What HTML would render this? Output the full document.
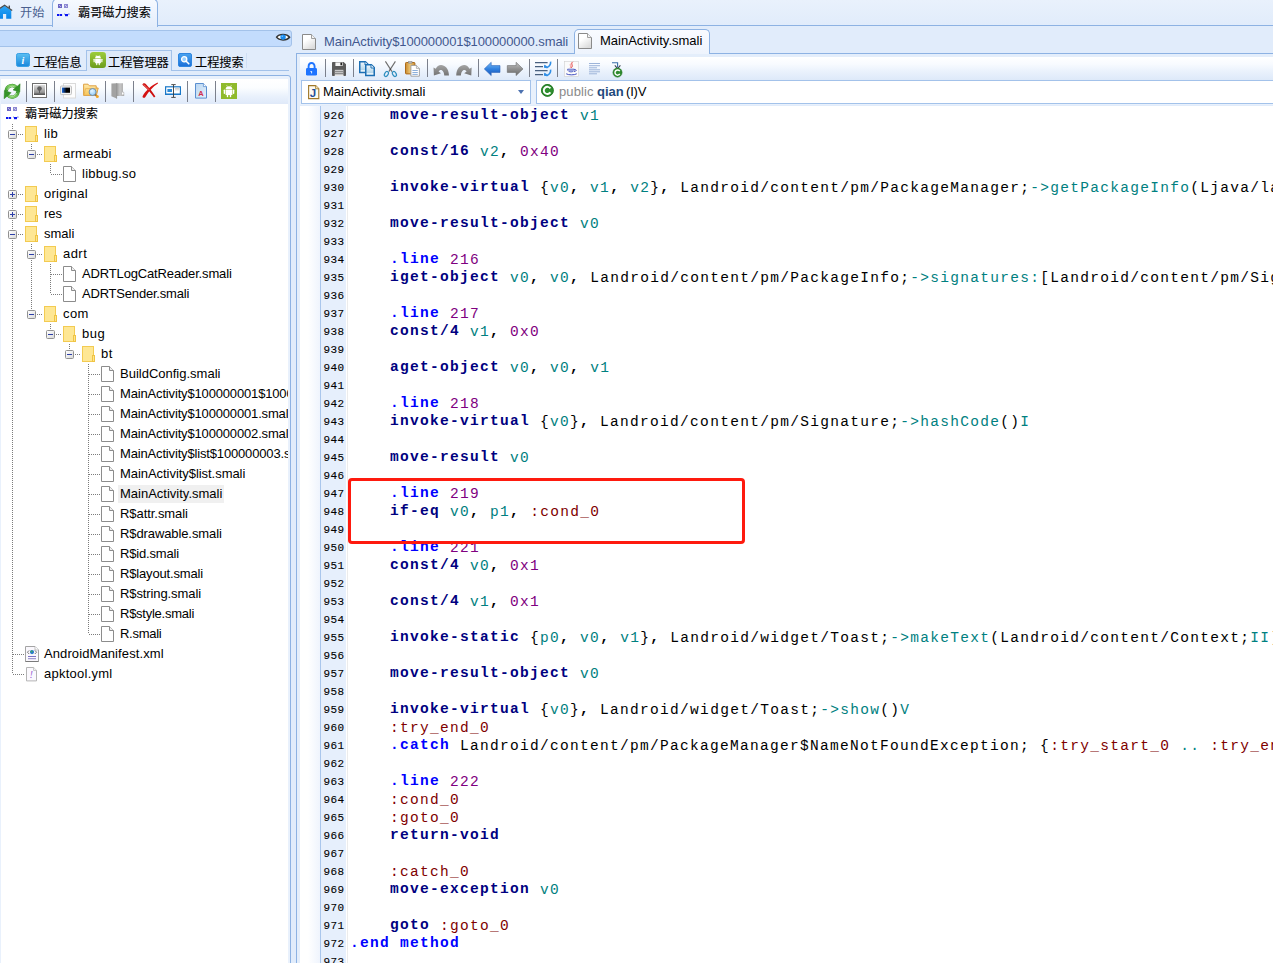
<!DOCTYPE html>
<html lang="zh"><head><meta charset="utf-8"><title>霸哥磁力搜索</title>
<style>
html,body{margin:0;padding:0;}
body{width:1273px;height:963px;overflow:hidden;position:relative;background:#e1ecfb;font-family:"Liberation Sans","Noto Sans CJK SC",sans-serif;font-size:13px;color:#000;}
.abs{position:absolute;}
.t{position:absolute;white-space:nowrap;line-height:20px;height:20px;}
.cn{font-size:12.2px;letter-spacing:-0.05px;-webkit-text-stroke:0.1px currentColor;}
.hl{position:absolute;height:1px;background:#8db2e3;}
.vl{position:absolute;width:1px;background:#8db2e3;}
.sep{position:absolute;width:1px;background:#7b808c;}
svg{position:absolute;overflow:visible;}
/* code */
#code{position:absolute;left:350px;top:107px;width:923px;height:860px;overflow:hidden;font-family:"Liberation Mono",monospace;font-size:14.5px;letter-spacing:1.3px;line-height:18px;white-space:pre;color:#000;}
#code div{height:18px;}
#nums{position:absolute;left:321px;top:106.5px;width:25px;font-family:"Liberation Mono",monospace;font-size:11px;letter-spacing:0.4px;line-height:18px;color:#000;-webkit-text-stroke:0.1px #000;}
#nums div{height:18px;padding-left:2.6px;}
.k,.d,.o{position:relative;top:-1px;}
.k{color:#000080;font-weight:bold;}
.d{color:#0000ff;font-weight:bold;}
.r{color:#008080;}
.n{color:#800080;}
.l{color:#800000;}
.o{color:#000;font-weight:bold;}
.m{color:#008080;}
</style></head><body>

<div class="abs" style="left:0;top:0;width:1273px;height:25px;background:linear-gradient(#e9f1fc,#e1ecfb);"></div>
<div class="hl" style="left:0;top:25px;width:1273px;"></div>
<div class="abs" style="left:52px;top:-2px;width:104px;height:28px;background:linear-gradient(#f7faff,#e4edfb);border:1px solid #8db2e3;border-bottom:none;border-radius:6px 6px 0 0;box-sizing:content-box;"></div>
<div class="t cn" style="left:20px;top:3px;color:#4a5f8f;-webkit-text-stroke:0;">开始</div>
<div class="t cn" style="left:78px;top:3px;">霸哥磁力搜索</div>
<div class="abs" style="left:-1px;top:30px;width:291px;height:15px;background:#c3dcfd;border:1px solid #a3c2ea;border-radius:0 3px 3px 0;"></div>
<div class="hl" style="left:0;top:70px;width:289px;background:#a3c2ea"></div>
<div class="abs" style="left:86px;top:50px;width:86px;height:21px;background:#dde9f9;border:1px solid #a3c2ea;border-bottom:none;box-sizing:border-box;"></div>
<div class="t cn" style="left:33px;top:53px;">工程信息</div>
<div class="t cn" style="left:108px;top:53px;">工程管理器</div>
<div class="t cn" style="left:195px;top:53px;">工程搜索</div>
<div class="vl" style="left:246px;top:53px;height:15px;background:#cfdff4"></div>
<div class="abs" style="left:-1px;top:75px;width:292px;height:900px;border:1px solid #8db2e3;background:#e9f1fc;box-sizing:border-box;border-radius:0 3px 0 0;"></div>
<div class="abs" style="left:1px;top:79px;width:287px;height:25px;background:linear-gradient(#ffffff 0,#fbfdff 35%,#e9f1fc 70%,#dfe9f9 100%);"></div>
<div class="abs" style="left:1px;top:104px;width:287px;height:860px;background:#fff;"></div>
<div class="sep" style="left:26px;top:81px;height:21px;"></div>
<div class="sep" style="left:54px;top:81px;height:21px;"></div>
<div class="sep" style="left:105px;top:81px;height:21px;"></div>
<div class="sep" style="left:133px;top:81px;height:21px;"></div>
<div class="sep" style="left:187px;top:81px;height:21px;"></div>
<div class="sep" style="left:215px;top:81px;height:21px;"></div>
<div id="tree" class="abs" style="left:1px;top:104px;width:287px;height:859px;overflow:hidden;">
<div class="abs" style="left:11px;top:20px;width:1px;height:550px;background:repeating-linear-gradient(#7c7c7c 0 1px,transparent 1px 2px);"></div>
<div class="abs" style="left:30px;top:40px;width:1px;height:10px;background:repeating-linear-gradient(#7c7c7c 0 1px,transparent 1px 2px);"></div>
<div class="abs" style="left:30px;top:140px;width:1px;height:70px;background:repeating-linear-gradient(#7c7c7c 0 1px,transparent 1px 2px);"></div>
<div class="abs" style="left:49px;top:60px;width:1px;height:10px;background:repeating-linear-gradient(#7c7c7c 0 1px,transparent 1px 2px);"></div>
<div class="abs" style="left:49px;top:160px;width:1px;height:30px;background:repeating-linear-gradient(#7c7c7c 0 1px,transparent 1px 2px);"></div>
<div class="abs" style="left:49px;top:220px;width:1px;height:10px;background:repeating-linear-gradient(#7c7c7c 0 1px,transparent 1px 2px);"></div>
<div class="abs" style="left:68px;top:240px;width:1px;height:10px;background:repeating-linear-gradient(#7c7c7c 0 1px,transparent 1px 2px);"></div>
<div class="abs" style="left:87px;top:260px;width:1px;height:270px;background:repeating-linear-gradient(#7c7c7c 0 1px,transparent 1px 2px);"></div>
<svg style="left:5px;top:3px" width="14" height="13" viewBox="0 0 14 13"><rect x="1" y="0" width="4" height="4" fill="#6c66c4"/><rect x="2" y="1" width="1" height="1" fill="#b9b6e6"/><rect x="3" y="2" width="1" height="1" fill="#b9b6e6"/><rect x="7" y="0" width="4" height="4" fill="#8d89d2"/><rect x="8" y="1" width="1" height="1" fill="#cfcdf0"/><rect x="9" y="2" width="1" height="1" fill="#cfcdf0"/><rect x="0" y="10" width="2.3" height="2" fill="#0a14f0"/><rect x="2.8" y="10" width="2.3" height="2" fill="#0a14f0"/><rect x="8" y="10" width="3" height="2.2" fill="#0a14f0"/><rect x="7" y="9.6" width="1" height="1" fill="#6a72e8"/><rect x="11" y="9.6" width="1.6" height="1" fill="#6a72e8"/></svg>
<div class="t cn" style="left:24px;top:0px;">霸哥磁力搜索</div>
<div class="abs" style="left:17px;top:30px;height:1px;width:6px;background:repeating-linear-gradient(90deg,#7c7c7c 0 1px,transparent 1px 2px);"></div>
<div class="abs" style="left:7px;top:26px;width:9px;height:9px;box-sizing:border-box;border:1px solid #919191;border-radius:1.5px;background:linear-gradient(135deg,#fff,#d9d9d9);"></div>
<div class="abs" style="left:9px;top:30px;width:5px;height:1px;background:#2d3fa8;"></div>
<svg style="left:24px;top:22px" width="13" height="16" viewBox="0 0 13 16"><rect x="0.5" y="0.5" width="11" height="15" fill="#fee794" stroke="#f3cb52"/><rect x="10.5" y="9.5" width="2" height="6" fill="#fde58f" stroke="#f0c443"/></svg>
<div class="t" style="left:43px;top:20px;letter-spacing:0.4px">lib</div>
<div class="abs" style="left:36px;top:50px;height:1px;width:6px;background:repeating-linear-gradient(90deg,#7c7c7c 0 1px,transparent 1px 2px);"></div>
<div class="abs" style="left:26px;top:46px;width:9px;height:9px;box-sizing:border-box;border:1px solid #919191;border-radius:1.5px;background:linear-gradient(135deg,#fff,#d9d9d9);"></div>
<div class="abs" style="left:28px;top:50px;width:5px;height:1px;background:#2d3fa8;"></div>
<svg style="left:43px;top:42px" width="13" height="16" viewBox="0 0 13 16"><rect x="0.5" y="0.5" width="11" height="15" fill="#fee794" stroke="#f3cb52"/><rect x="10.5" y="9.5" width="2" height="6" fill="#fde58f" stroke="#f0c443"/></svg>
<div class="t" style="left:62px;top:40px;letter-spacing:0.23px">armeabi</div>
<div class="abs" style="left:50px;top:70px;height:1px;width:11px;background:repeating-linear-gradient(90deg,#7c7c7c 0 1px,transparent 1px 2px);"></div>
<svg style="left:62px;top:62px" width="13" height="16" viewBox="0 0 13 16"><path d="M0.5 0.5H8.5L12.5 4.5V15.5H0.5Z" fill="#fff" stroke="#8c8c8c"/><path d="M8.5 0.5V4.5H12.5" fill="#f0f0f0" stroke="#8c8c8c"/></svg>
<div class="t" style="left:81px;top:60px;letter-spacing:0.25px">libbug.so</div>
<div class="abs" style="left:17px;top:90px;height:1px;width:6px;background:repeating-linear-gradient(90deg,#7c7c7c 0 1px,transparent 1px 2px);"></div>
<div class="abs" style="left:7px;top:86px;width:9px;height:9px;box-sizing:border-box;border:1px solid #919191;border-radius:1.5px;background:linear-gradient(135deg,#fff,#d9d9d9);"></div>
<div class="abs" style="left:9px;top:90px;width:5px;height:1px;background:#2d3fa8;"></div>
<div class="abs" style="left:11px;top:88px;width:1px;height:5px;background:#2d3fa8;"></div>
<svg style="left:24px;top:82px" width="13" height="16" viewBox="0 0 13 16"><rect x="0.5" y="0.5" width="11" height="15" fill="#fee794" stroke="#f3cb52"/><rect x="10.5" y="9.5" width="2" height="6" fill="#fde58f" stroke="#f0c443"/></svg>
<div class="t" style="left:43px;top:80px;letter-spacing:0.26px">original</div>
<div class="abs" style="left:17px;top:110px;height:1px;width:6px;background:repeating-linear-gradient(90deg,#7c7c7c 0 1px,transparent 1px 2px);"></div>
<div class="abs" style="left:7px;top:106px;width:9px;height:9px;box-sizing:border-box;border:1px solid #919191;border-radius:1.5px;background:linear-gradient(135deg,#fff,#d9d9d9);"></div>
<div class="abs" style="left:9px;top:110px;width:5px;height:1px;background:#2d3fa8;"></div>
<div class="abs" style="left:11px;top:108px;width:1px;height:5px;background:#2d3fa8;"></div>
<svg style="left:24px;top:102px" width="13" height="16" viewBox="0 0 13 16"><rect x="0.5" y="0.5" width="11" height="15" fill="#fee794" stroke="#f3cb52"/><rect x="10.5" y="9.5" width="2" height="6" fill="#fde58f" stroke="#f0c443"/></svg>
<div class="t" style="left:43px;top:100px">res</div>
<div class="abs" style="left:17px;top:130px;height:1px;width:6px;background:repeating-linear-gradient(90deg,#7c7c7c 0 1px,transparent 1px 2px);"></div>
<div class="abs" style="left:7px;top:126px;width:9px;height:9px;box-sizing:border-box;border:1px solid #919191;border-radius:1.5px;background:linear-gradient(135deg,#fff,#d9d9d9);"></div>
<div class="abs" style="left:9px;top:130px;width:5px;height:1px;background:#2d3fa8;"></div>
<svg style="left:24px;top:122px" width="13" height="16" viewBox="0 0 13 16"><rect x="0.5" y="0.5" width="11" height="15" fill="#fee794" stroke="#f3cb52"/><rect x="10.5" y="9.5" width="2" height="6" fill="#fde58f" stroke="#f0c443"/></svg>
<div class="t" style="left:43px;top:120px">smali</div>
<div class="abs" style="left:36px;top:150px;height:1px;width:6px;background:repeating-linear-gradient(90deg,#7c7c7c 0 1px,transparent 1px 2px);"></div>
<div class="abs" style="left:26px;top:146px;width:9px;height:9px;box-sizing:border-box;border:1px solid #919191;border-radius:1.5px;background:linear-gradient(135deg,#fff,#d9d9d9);"></div>
<div class="abs" style="left:28px;top:150px;width:5px;height:1px;background:#2d3fa8;"></div>
<svg style="left:43px;top:142px" width="13" height="16" viewBox="0 0 13 16"><rect x="0.5" y="0.5" width="11" height="15" fill="#fee794" stroke="#f3cb52"/><rect x="10.5" y="9.5" width="2" height="6" fill="#fde58f" stroke="#f0c443"/></svg>
<div class="t" style="left:62px;top:140px;letter-spacing:0.45px">adrt</div>
<div class="abs" style="left:50px;top:170px;height:1px;width:11px;background:repeating-linear-gradient(90deg,#7c7c7c 0 1px,transparent 1px 2px);"></div>
<svg style="left:62px;top:162px" width="13" height="16" viewBox="0 0 13 16"><path d="M0.5 0.5H8.5L12.5 4.5V15.5H0.5Z" fill="#fff" stroke="#8c8c8c"/><path d="M8.5 0.5V4.5H12.5" fill="#f0f0f0" stroke="#8c8c8c"/></svg>
<div class="t" style="left:81px;top:160px;letter-spacing:-0.15px">ADRTLogCatReader.smali</div>
<div class="abs" style="left:50px;top:190px;height:1px;width:11px;background:repeating-linear-gradient(90deg,#7c7c7c 0 1px,transparent 1px 2px);"></div>
<svg style="left:62px;top:182px" width="13" height="16" viewBox="0 0 13 16"><path d="M0.5 0.5H8.5L12.5 4.5V15.5H0.5Z" fill="#fff" stroke="#8c8c8c"/><path d="M8.5 0.5V4.5H12.5" fill="#f0f0f0" stroke="#8c8c8c"/></svg>
<div class="t" style="left:81px;top:180px;letter-spacing:-0.2px">ADRTSender.smali</div>
<div class="abs" style="left:36px;top:210px;height:1px;width:6px;background:repeating-linear-gradient(90deg,#7c7c7c 0 1px,transparent 1px 2px);"></div>
<div class="abs" style="left:26px;top:206px;width:9px;height:9px;box-sizing:border-box;border:1px solid #919191;border-radius:1.5px;background:linear-gradient(135deg,#fff,#d9d9d9);"></div>
<div class="abs" style="left:28px;top:210px;width:5px;height:1px;background:#2d3fa8;"></div>
<svg style="left:43px;top:202px" width="13" height="16" viewBox="0 0 13 16"><rect x="0.5" y="0.5" width="11" height="15" fill="#fee794" stroke="#f3cb52"/><rect x="10.5" y="9.5" width="2" height="6" fill="#fde58f" stroke="#f0c443"/></svg>
<div class="t" style="left:62px;top:200px;letter-spacing:0.4px">com</div>
<div class="abs" style="left:55px;top:230px;height:1px;width:6px;background:repeating-linear-gradient(90deg,#7c7c7c 0 1px,transparent 1px 2px);"></div>
<div class="abs" style="left:45px;top:226px;width:9px;height:9px;box-sizing:border-box;border:1px solid #919191;border-radius:1.5px;background:linear-gradient(135deg,#fff,#d9d9d9);"></div>
<div class="abs" style="left:47px;top:230px;width:5px;height:1px;background:#2d3fa8;"></div>
<svg style="left:62px;top:222px" width="13" height="16" viewBox="0 0 13 16"><rect x="0.5" y="0.5" width="11" height="15" fill="#fee794" stroke="#f3cb52"/><rect x="10.5" y="9.5" width="2" height="6" fill="#fde58f" stroke="#f0c443"/></svg>
<div class="t" style="left:81px;top:220px;letter-spacing:0.5px">bug</div>
<div class="abs" style="left:74px;top:250px;height:1px;width:6px;background:repeating-linear-gradient(90deg,#7c7c7c 0 1px,transparent 1px 2px);"></div>
<div class="abs" style="left:64px;top:246px;width:9px;height:9px;box-sizing:border-box;border:1px solid #919191;border-radius:1.5px;background:linear-gradient(135deg,#fff,#d9d9d9);"></div>
<div class="abs" style="left:66px;top:250px;width:5px;height:1px;background:#2d3fa8;"></div>
<svg style="left:81px;top:242px" width="13" height="16" viewBox="0 0 13 16"><rect x="0.5" y="0.5" width="11" height="15" fill="#fee794" stroke="#f3cb52"/><rect x="10.5" y="9.5" width="2" height="6" fill="#fde58f" stroke="#f0c443"/></svg>
<div class="t" style="left:100px;top:240px;letter-spacing:0.6px">bt</div>
<div class="abs" style="left:88px;top:270px;height:1px;width:11px;background:repeating-linear-gradient(90deg,#7c7c7c 0 1px,transparent 1px 2px);"></div>
<svg style="left:100px;top:262px" width="13" height="16" viewBox="0 0 13 16"><path d="M0.5 0.5H8.5L12.5 4.5V15.5H0.5Z" fill="#fff" stroke="#8c8c8c"/><path d="M8.5 0.5V4.5H12.5" fill="#f0f0f0" stroke="#8c8c8c"/></svg>
<div class="t" style="left:119px;top:260px">BuildConfig.smali</div>
<div class="abs" style="left:88px;top:290px;height:1px;width:11px;background:repeating-linear-gradient(90deg,#7c7c7c 0 1px,transparent 1px 2px);"></div>
<svg style="left:100px;top:282px" width="13" height="16" viewBox="0 0 13 16"><path d="M0.5 0.5H8.5L12.5 4.5V15.5H0.5Z" fill="#fff" stroke="#8c8c8c"/><path d="M8.5 0.5V4.5H12.5" fill="#f0f0f0" stroke="#8c8c8c"/></svg>
<div class="t" style="left:119px;top:280px;letter-spacing:-0.16px">MainActivity$100000001$100000000.smali</div>
<div class="abs" style="left:88px;top:310px;height:1px;width:11px;background:repeating-linear-gradient(90deg,#7c7c7c 0 1px,transparent 1px 2px);"></div>
<svg style="left:100px;top:302px" width="13" height="16" viewBox="0 0 13 16"><path d="M0.5 0.5H8.5L12.5 4.5V15.5H0.5Z" fill="#fff" stroke="#8c8c8c"/><path d="M8.5 0.5V4.5H12.5" fill="#f0f0f0" stroke="#8c8c8c"/></svg>
<div class="t" style="left:119px;top:300px;letter-spacing:-0.16px">MainActivity$100000001.smali</div>
<div class="abs" style="left:88px;top:330px;height:1px;width:11px;background:repeating-linear-gradient(90deg,#7c7c7c 0 1px,transparent 1px 2px);"></div>
<svg style="left:100px;top:322px" width="13" height="16" viewBox="0 0 13 16"><path d="M0.5 0.5H8.5L12.5 4.5V15.5H0.5Z" fill="#fff" stroke="#8c8c8c"/><path d="M8.5 0.5V4.5H12.5" fill="#f0f0f0" stroke="#8c8c8c"/></svg>
<div class="t" style="left:119px;top:320px;letter-spacing:-0.16px">MainActivity$100000002.smali</div>
<div class="abs" style="left:88px;top:350px;height:1px;width:11px;background:repeating-linear-gradient(90deg,#7c7c7c 0 1px,transparent 1px 2px);"></div>
<svg style="left:100px;top:342px" width="13" height="16" viewBox="0 0 13 16"><path d="M0.5 0.5H8.5L12.5 4.5V15.5H0.5Z" fill="#fff" stroke="#8c8c8c"/><path d="M8.5 0.5V4.5H12.5" fill="#f0f0f0" stroke="#8c8c8c"/></svg>
<div class="t" style="left:119px;top:340px;letter-spacing:-0.16px">MainActivity$list$100000003.smali</div>
<div class="abs" style="left:88px;top:370px;height:1px;width:11px;background:repeating-linear-gradient(90deg,#7c7c7c 0 1px,transparent 1px 2px);"></div>
<svg style="left:100px;top:362px" width="13" height="16" viewBox="0 0 13 16"><path d="M0.5 0.5H8.5L12.5 4.5V15.5H0.5Z" fill="#fff" stroke="#8c8c8c"/><path d="M8.5 0.5V4.5H12.5" fill="#f0f0f0" stroke="#8c8c8c"/></svg>
<div class="t" style="left:119px;top:360px;letter-spacing:-0.05px">MainActivity$list.smali</div>
<div class="abs" style="left:88px;top:390px;height:1px;width:11px;background:repeating-linear-gradient(90deg,#7c7c7c 0 1px,transparent 1px 2px);"></div>
<svg style="left:100px;top:382px" width="13" height="16" viewBox="0 0 13 16"><path d="M0.5 0.5H8.5L12.5 4.5V15.5H0.5Z" fill="#fff" stroke="#8c8c8c"/><path d="M8.5 0.5V4.5H12.5" fill="#f0f0f0" stroke="#8c8c8c"/></svg>
<div class="abs" style="left:117px;top:381px;width:106px;height:18px;background:#f0f0f0;"></div>
<div class="t" style="left:119px;top:380px">MainActivity.smali</div>
<div class="abs" style="left:88px;top:410px;height:1px;width:11px;background:repeating-linear-gradient(90deg,#7c7c7c 0 1px,transparent 1px 2px);"></div>
<svg style="left:100px;top:402px" width="13" height="16" viewBox="0 0 13 16"><path d="M0.5 0.5H8.5L12.5 4.5V15.5H0.5Z" fill="#fff" stroke="#8c8c8c"/><path d="M8.5 0.5V4.5H12.5" fill="#f0f0f0" stroke="#8c8c8c"/></svg>
<div class="t" style="left:119px;top:400px;letter-spacing:-0.06px">R$attr.smali</div>
<div class="abs" style="left:88px;top:430px;height:1px;width:11px;background:repeating-linear-gradient(90deg,#7c7c7c 0 1px,transparent 1px 2px);"></div>
<svg style="left:100px;top:422px" width="13" height="16" viewBox="0 0 13 16"><path d="M0.5 0.5H8.5L12.5 4.5V15.5H0.5Z" fill="#fff" stroke="#8c8c8c"/><path d="M8.5 0.5V4.5H12.5" fill="#f0f0f0" stroke="#8c8c8c"/></svg>
<div class="t" style="left:119px;top:420px;letter-spacing:-0.1px">R$drawable.smali</div>
<div class="abs" style="left:88px;top:450px;height:1px;width:11px;background:repeating-linear-gradient(90deg,#7c7c7c 0 1px,transparent 1px 2px);"></div>
<svg style="left:100px;top:442px" width="13" height="16" viewBox="0 0 13 16"><path d="M0.5 0.5H8.5L12.5 4.5V15.5H0.5Z" fill="#fff" stroke="#8c8c8c"/><path d="M8.5 0.5V4.5H12.5" fill="#f0f0f0" stroke="#8c8c8c"/></svg>
<div class="t" style="left:119px;top:440px;letter-spacing:-0.17px">R$id.smali</div>
<div class="abs" style="left:88px;top:470px;height:1px;width:11px;background:repeating-linear-gradient(90deg,#7c7c7c 0 1px,transparent 1px 2px);"></div>
<svg style="left:100px;top:462px" width="13" height="16" viewBox="0 0 13 16"><path d="M0.5 0.5H8.5L12.5 4.5V15.5H0.5Z" fill="#fff" stroke="#8c8c8c"/><path d="M8.5 0.5V4.5H12.5" fill="#f0f0f0" stroke="#8c8c8c"/></svg>
<div class="t" style="left:119px;top:460px;letter-spacing:-0.16px">R$layout.smali</div>
<div class="abs" style="left:88px;top:490px;height:1px;width:11px;background:repeating-linear-gradient(90deg,#7c7c7c 0 1px,transparent 1px 2px);"></div>
<svg style="left:100px;top:482px" width="13" height="16" viewBox="0 0 13 16"><path d="M0.5 0.5H8.5L12.5 4.5V15.5H0.5Z" fill="#fff" stroke="#8c8c8c"/><path d="M8.5 0.5V4.5H12.5" fill="#f0f0f0" stroke="#8c8c8c"/></svg>
<div class="t" style="left:119px;top:480px;letter-spacing:-0.1px">R$string.smali</div>
<div class="abs" style="left:88px;top:510px;height:1px;width:11px;background:repeating-linear-gradient(90deg,#7c7c7c 0 1px,transparent 1px 2px);"></div>
<svg style="left:100px;top:502px" width="13" height="16" viewBox="0 0 13 16"><path d="M0.5 0.5H8.5L12.5 4.5V15.5H0.5Z" fill="#fff" stroke="#8c8c8c"/><path d="M8.5 0.5V4.5H12.5" fill="#f0f0f0" stroke="#8c8c8c"/></svg>
<div class="t" style="left:119px;top:500px;letter-spacing:-0.25px">R$style.smali</div>
<div class="abs" style="left:88px;top:530px;height:1px;width:11px;background:repeating-linear-gradient(90deg,#7c7c7c 0 1px,transparent 1px 2px);"></div>
<svg style="left:100px;top:522px" width="13" height="16" viewBox="0 0 13 16"><path d="M0.5 0.5H8.5L12.5 4.5V15.5H0.5Z" fill="#fff" stroke="#8c8c8c"/><path d="M8.5 0.5V4.5H12.5" fill="#f0f0f0" stroke="#8c8c8c"/></svg>
<div class="t" style="left:119px;top:520px;letter-spacing:-0.28px">R.smali</div>
<div class="abs" style="left:12px;top:550px;height:1px;width:11px;background:repeating-linear-gradient(90deg,#7c7c7c 0 1px,transparent 1px 2px);"></div>
<svg style="left:24px;top:542px" width="14" height="16" viewBox="0 0 14 16"><path d="M0.5 0.5H10L13.5 4V15.5H0.5Z" fill="#faf8fd" stroke="#a4a4a4"/><path d="M0.5 15.5H13.5" stroke="#7a7a7a"/><path d="M10 0.5V4H13.5" fill="#fff" stroke="#b4b4b4" stroke-width="0.8"/><path d="M4.2 4.4L2.4 6.2L4.2 8M9.8 4.4L11.6 6.2L9.8 8" fill="none" stroke="#6a6a6a" stroke-width="0.9"/><circle cx="7" cy="6.1" r="2.1" fill="#2a78d0"/><circle cx="6.6" cy="5.6" r="1" fill="#3faa5a"/><rect x="3" y="10" width="8" height="1" fill="#7d72c4"/><rect x="3" y="12.2" width="8" height="1" fill="#8f86cc"/></svg>
<div class="t" style="left:43px;top:540px;letter-spacing:0.1px">AndroidManifest.xml</div>
<div class="abs" style="left:12px;top:570px;height:1px;width:11px;background:repeating-linear-gradient(90deg,#7c7c7c 0 1px,transparent 1px 2px);"></div>
<svg style="left:24px;top:562px" width="13" height="16" viewBox="0 0 13 16"><path d="M1.5 1.5H8.6L11.5 4.4V14.9H1.5Z" fill="#fbf9fe" stroke="#b4b4b4"/><path d="M8.6 1.5V4.4H11.5" fill="#fff" stroke="#b4b4b4" stroke-width="0.8"/><text x="4.6" y="12.4" font-family="Liberation Serif,serif" font-style="italic" font-size="10.5" fill="#9a62d4">!</text></svg>
<div class="t" style="left:43px;top:560px;letter-spacing:0.25px">apktool.yml</div>
</div>
<div class="hl" style="left:296px;top:53px;width:980px;"></div>
<div class="abs" style="left:574px;top:29px;width:134px;height:26px;background:linear-gradient(#f9fbff,#edf3fd);border:1px solid #8db2e3;border-bottom:none;border-radius:5px 5px 0 0;"></div>
<div class="t" style="left:324px;top:32px;color:#41588f;letter-spacing:-0.1px;">MainActivity$100000001$100000000.smali</div>
<div class="t" style="left:600px;top:31px;">MainActivity.smali</div>
<svg style="left:302px;top:34px" width="14" height="16" viewBox="0 0 14 16"><defs><linearGradient id="fg1" x1="0" y1="0" x2="0.6" y2="1"><stop offset="0.4" stop-color="#fff"/><stop offset="1" stop-color="#dcdcdc"/></linearGradient></defs><path d="M0.5 0.5H9.5L13.5 4.5V15.5H0.5Z" fill="url(#fg1)" stroke="#8a8a8a"/><path d="M9.5 0.5V4.5H13.5" fill="#f4f4f4" stroke="#a0a0a0"/></svg>
<svg style="left:578px;top:33px" width="14" height="16" viewBox="0 0 14 16"><defs><linearGradient id="fg2" x1="0" y1="0" x2="0.6" y2="1"><stop offset="0.4" stop-color="#fff"/><stop offset="1" stop-color="#dcdcdc"/></linearGradient></defs><path d="M0.5 0.5H9.5L13.5 4.5V15.5H0.5Z" fill="url(#fg2)" stroke="#8a8a8a"/><path d="M9.5 0.5V4.5H13.5" fill="#f4f4f4" stroke="#a0a0a0"/></svg>
<div class="vl" style="left:296px;top:54px;height:920px;"></div>
<div class="abs" style="left:297px;top:54px;width:976px;height:26px;background:linear-gradient(#e4eefb 0,#e4eefb 2.5px,#ffffff 3px,#f8fbff 10px,#e9f1fc 18px,#dde9f9 26px);"></div>
<div class="abs" style="left:297px;top:54px;width:3px;height:920px;background:#e4eefb;"></div>
<div class="abs" style="left:300px;top:81px;width:980px;height:24px;background:#e9f1fc;"></div>
<div class="abs" style="left:301px;top:80px;width:230px;height:24px;box-sizing:border-box;border:1px solid #a3c2ea;background:#fff;"></div>
<div class="abs" style="left:536px;top:80px;width:760px;height:24px;box-sizing:border-box;border:1px solid #a3c2ea;background:#fff;"></div>
<div class="t" style="left:323px;top:82px;">MainActivity.smali</div>
<div class="abs" style="left:518px;top:90px;width:0;height:0;border-left:3.5px solid transparent;border-right:3.5px solid transparent;border-top:4px solid #4d72b0;"></div>
<div class="t" style="left:559px;top:82px;color:#8a8a8a;letter-spacing:0.1px;">public</div>
<div class="t" style="left:597px;top:82px;color:#1f4a7d;font-weight:bold;letter-spacing:0;">qian</div>
<div class="t" style="left:626px;top:82px;letter-spacing:-0.2px;">(I)V</div>
<div class="sep" style="left:325px;top:59px;height:18px;"></div>
<div class="sep" style="left:353px;top:59px;height:18px;"></div>
<div class="sep" style="left:427px;top:59px;height:18px;"></div>
<div class="sep" style="left:478px;top:59px;height:18px;"></div>
<div class="sep" style="left:529px;top:59px;height:18px;"></div>
<div class="sep" style="left:557px;top:59px;height:18px;"></div>
<div class="abs" style="left:300px;top:106px;width:973px;height:860px;background:#fff;"></div>
<div class="abs" style="left:300px;top:106px;width:20px;height:860px;background:linear-gradient(90deg,#fff 0,#fff 40%,#eff4fd 100%);"></div>
<div class="vl" style="left:320px;top:106px;height:860px;background:#a9c6ec"></div>
<div class="abs" style="left:321px;top:106px;width:25px;height:860px;background:#e6effc;"></div>
<div class="vl" style="left:347px;top:106px;height:860px;background:#ececec"></div>
<div id="nums">
<div>926</div>
<div>927</div>
<div>928</div>
<div>929</div>
<div>930</div>
<div>931</div>
<div>932</div>
<div>933</div>
<div>934</div>
<div>935</div>
<div>936</div>
<div>937</div>
<div>938</div>
<div>939</div>
<div>940</div>
<div>941</div>
<div>942</div>
<div>943</div>
<div>944</div>
<div>945</div>
<div>946</div>
<div>947</div>
<div>948</div>
<div>949</div>
<div>950</div>
<div>951</div>
<div>952</div>
<div>953</div>
<div>954</div>
<div>955</div>
<div>956</div>
<div>957</div>
<div>958</div>
<div>959</div>
<div>960</div>
<div>961</div>
<div>962</div>
<div>963</div>
<div>964</div>
<div>965</div>
<div>966</div>
<div>967</div>
<div>968</div>
<div>969</div>
<div>970</div>
<div>971</div>
<div>972</div>
<div>973</div>
<div>974</div>
</div>
<div id="code"><div>    <span class="k">move-result-object</span> <span class="r">v1</span></div><div></div><div>    <span class="k">const/16</span> <span class="r">v2</span><span class="o">,</span> <span class="n">0x40</span></div><div></div><div>    <span class="k">invoke-virtual</span> {<span class="r">v0</span><span class="o">,</span> <span class="r">v1</span><span class="o">,</span> <span class="r">v2</span>}<span class="o">,</span> Landroid/content/pm/PackageManager;<span class="m">-&gt;</span><span class="m">getPackageInfo</span>(Ljava/lang/String;<span class="m">I</span>)Landroid/content/pm/PackageInfo;</div><div></div><div>    <span class="k">move-result-object</span> <span class="r">v0</span></div><div></div><div>    <span class="d">.line</span> <span class="n">216</span></div><div>    <span class="k">iget-object</span> <span class="r">v0</span><span class="o">,</span> <span class="r">v0</span><span class="o">,</span> Landroid/content/pm/PackageInfo;<span class="m">-&gt;</span><span class="m">signatures:</span>[Landroid/content/pm/Signature;</div><div></div><div>    <span class="d">.line</span> <span class="n">217</span></div><div>    <span class="k">const/4</span> <span class="r">v1</span><span class="o">,</span> <span class="n">0x0</span></div><div></div><div>    <span class="k">aget-object</span> <span class="r">v0</span><span class="o">,</span> <span class="r">v0</span><span class="o">,</span> <span class="r">v1</span></div><div></div><div>    <span class="d">.line</span> <span class="n">218</span></div><div>    <span class="k">invoke-virtual</span> {<span class="r">v0</span>}<span class="o">,</span> Landroid/content/pm/Signature;<span class="m">-&gt;</span><span class="m">hashCode</span>()<span class="m">I</span></div><div></div><div>    <span class="k">move-result</span> <span class="r">v0</span></div><div></div><div>    <span class="d">.line</span> <span class="n">219</span></div><div>    <span class="k">if-eq</span> <span class="r">v0</span><span class="o">,</span> <span class="r">p1</span><span class="o">,</span> <span class="l">:cond_0</span></div><div></div><div>    <span class="d">.line</span> <span class="n">221</span></div><div>    <span class="k">const/4</span> <span class="r">v0</span><span class="o">,</span> <span class="n">0x1</span></div><div></div><div>    <span class="k">const/4</span> <span class="r">v1</span><span class="o">,</span> <span class="n">0x1</span></div><div></div><div>    <span class="k">invoke-static</span> {<span class="r">p0</span><span class="o">,</span> <span class="r">v0</span><span class="o">,</span> <span class="r">v1</span>}<span class="o">,</span> Landroid/widget/Toast;<span class="m">-&gt;</span><span class="m">makeText</span>(Landroid/content/Context;<span class="m">II</span>)Landroid/widget/Toast;</div><div></div><div>    <span class="k">move-result-object</span> <span class="r">v0</span></div><div></div><div>    <span class="k">invoke-virtual</span> {<span class="r">v0</span>}<span class="o">,</span> Landroid/widget/Toast;<span class="m">-&gt;</span><span class="m">show</span>()<span class="m">V</span></div><div>    <span class="l">:try_end_0</span></div><div>    <span class="d">.catch</span> Landroid/content/pm/PackageManager$NameNotFoundException; {<span class="l">:try_start_0</span> <span class="m">..</span> <span class="l">:try_end_0</span>} <span class="l">:catch_0</span></div><div></div><div>    <span class="d">.line</span> <span class="n">222</span></div><div>    <span class="l">:cond_0</span></div><div>    <span class="l">:goto_0</span></div><div>    <span class="k">return-void</span></div><div></div><div>    <span class="l">:catch_0</span></div><div>    <span class="k">move-exception</span> <span class="r">v0</span></div><div></div><div>    <span class="k">goto</span> <span class="l">:goto_0</span></div><div><span class="d">.end method</span></div><div></div><div></div></div>
<div class="abs" style="left:348px;top:478px;width:397px;height:66px;box-sizing:border-box;border:3px solid #fe1a0e;border-radius:4px;"></div>
<svg style="left:0px;top:0px" width="16" height="24" viewBox="0 0 16 24"><defs><linearGradient id="hm" x1="0" y1="0" x2="0" y2="1"><stop offset="0" stop-color="#2aa6f6"/><stop offset="1" stop-color="#0a84e8"/></linearGradient></defs><path d="M-4 18.8V11L4.5 5.8L11.3 10.5V18.8H6.2V14H3V18.8Z" fill="url(#hm)"/><path d="M-5 11.6L4.6 5.3L12.2 10.4" fill="none" stroke="#4a4a4a" stroke-width="1.2"/><rect x="8.6" y="5.6" width="1.4" height="2.6" fill="#4a4a4a"/></svg>
<svg style="left:57px;top:4px" width="14" height="13" viewBox="0 0 14 13"><rect x="1" y="0" width="4" height="4" fill="#6c66c4"/><rect x="2" y="1" width="1" height="1" fill="#b9b6e6"/><rect x="3" y="2" width="1" height="1" fill="#b9b6e6"/><rect x="7" y="0" width="4" height="4" fill="#8d89d2"/><rect x="8" y="1" width="1" height="1" fill="#cfcdf0"/><rect x="9" y="2" width="1" height="1" fill="#cfcdf0"/><rect x="0" y="10" width="2.3" height="2" fill="#0a14f0"/><rect x="2.8" y="10" width="2.3" height="2" fill="#0a14f0"/><rect x="8" y="10" width="3" height="2.2" fill="#0a14f0"/><rect x="7" y="9.6" width="1" height="1" fill="#6a72e8"/><rect x="11" y="9.6" width="1.6" height="1" fill="#6a72e8"/></svg>
<svg style="left:276px;top:32.5px" width="14.2" height="8.4" viewBox="0 0 14.2 8.4"><path d="M0.6 4.2C3 0.6 11 0.6 13.6 4.2C11 7.8 3 7.8 0.6 4.2Z" fill="#fff" stroke="#333" stroke-width="1.5"/><circle cx="7.1" cy="4.1" r="2.7" fill="#1a8cf0"/><circle cx="6.3" cy="3.2" r="0.8" fill="#7cc4ff"/></svg>
<svg style="left:16px;top:53px" width="14" height="14" viewBox="0 0 14 14"><defs><linearGradient id="inf" x1="0" y1="0" x2="0" y2="1"><stop offset="0" stop-color="#5cc0f2"/><stop offset="1" stop-color="#1787dc"/></linearGradient></defs><rect x="0.5" y="0.5" width="13" height="13" rx="1.8" fill="url(#inf)" stroke="#3aa0e4"/><text x="7" y="10.6" text-anchor="middle" font-family="Liberation Serif,serif" font-style="italic" font-weight="bold" font-size="10" fill="#fff">i</text></svg>
<svg style="left:90px;top:52px" width="16" height="16" viewBox="0 0 16 16"><defs><linearGradient id="an1" x1="0" y1="0" x2="0" y2="1"><stop offset="0" stop-color="#9dcd3c"/><stop offset="1" stop-color="#6c9c1c"/></linearGradient></defs><rect x="0" y="0" width="16" height="16" rx="3.2" fill="url(#an1)"/><g transform="translate(8 8.4) scale(0.84) translate(-8 -8.6)"><path d="M4.6 6.6H11.4V11.4Q11.4 12 10.8 12H10.2V13.6Q10.2 14.3 9.5 14.3Q8.8 14.3 8.8 13.6V12H7.2V13.6Q7.2 14.3 6.5 14.3Q5.8 14.3 5.8 13.6V12H5.2Q4.6 12 4.6 11.4Z" fill="#fff"/><path d="M4.6 6.1Q4.7 3.2 8 3.2Q11.3 3.2 11.4 6.1Z" fill="#fff"/><rect x="2.7" y="6.6" width="1.4" height="4.3" rx="0.7" fill="#fff"/><rect x="11.9" y="6.6" width="1.4" height="4.3" rx="0.7" fill="#fff"/><path d="M5.6 2.2L6.4 3.6M10.4 2.2L9.6 3.6" stroke="#fff" stroke-width="0.6"/></g></svg>
<svg style="left:178px;top:53px" width="14" height="14" viewBox="0 0 14 14"><defs><linearGradient id="sr" x1="0" y1="0" x2="0" y2="1"><stop offset="0" stop-color="#4aa4f0"/><stop offset="1" stop-color="#1a6fd8"/></linearGradient></defs><rect x="0.5" y="0.5" width="13" height="13" rx="1.5" fill="url(#sr)" stroke="#2f86e0"/><circle cx="6.2" cy="6.2" r="2.6" fill="#9ad0ff" stroke="#fff" stroke-width="1.3"/><path d="M8.2 8.2L10.8 10.8" stroke="#fff" stroke-width="1.6" stroke-linecap="round"/></svg>
<svg style="left:4px;top:83px" width="16.2" height="16.6" viewBox="0 0 16.2 16.6"><defs><linearGradient id="rf" x1="0" y1="0" x2="0" y2="1"><stop offset="0" stop-color="#7ccc60"/><stop offset="1" stop-color="#3a9a2c"/></linearGradient></defs><path d="M2.2 8.2A5.9 5.9 0 0 1 12.6 4.6" fill="none" stroke="#3a8f2c" stroke-width="3.4"/><path d="M2.2 8.2A5.9 5.9 0 0 1 12.6 4.6" fill="none" stroke="url(#rf)" stroke-width="2.6"/><path d="M9 6.9L16.1 0.8L15.8 9Z" fill="#349428" stroke="#2a7f1e" stroke-width="0.5"/><path d="M3.6 6.6A4.6 4.6 0 0 1 10.8 4.2" fill="none" stroke="#bfe8ac" stroke-width="0.8"/><g transform="rotate(180 8.1 8.3)"><path d="M2.2 8.2A5.9 5.9 0 0 1 12.6 4.6" fill="none" stroke="#3a8f2c" stroke-width="3.4"/><path d="M2.2 8.2A5.9 5.9 0 0 1 12.6 4.6" fill="none" stroke="url(#rf)" stroke-width="2.6"/><path d="M9 6.9L16.1 0.8L15.8 9Z" fill="#349428" stroke="#2a7f1e" stroke-width="0.5"/><path d="M3.6 6.6A4.6 4.6 0 0 1 10.8 4.2" fill="none" stroke="#bfe8ac" stroke-width="0.8"/></g></svg>
<svg style="left:32px;top:83px" width="15" height="15" viewBox="0 0 15 15"><defs><linearGradient id="im" x1="0" y1="0" x2="0" y2="1"><stop offset="0" stop-color="#dcdcdc"/><stop offset="0.7" stop-color="#9a9a9a"/><stop offset="1" stop-color="#6a6a6a"/></linearGradient></defs><rect x="0.5" y="0.5" width="14" height="14" fill="#fff" stroke="#6e6e6e"/><rect x="2" y="2" width="11" height="10" fill="url(#im)"/><circle cx="7.5" cy="5.6" r="2.3" fill="#5e5e5e"/><rect x="7" y="6" width="1" height="4" fill="#5e5e5e"/><rect x="2" y="10.6" width="11" height="1.4" fill="#5a5a5a"/></svg>
<svg style="left:60px;top:83px" width="16" height="16" viewBox="0 0 16 16"><defs><linearGradient id="sc" x1="0" y1="0" x2="1" y2="0"><stop offset="0" stop-color="#1a6ae0"/><stop offset="0.55" stop-color="#000"/></linearGradient></defs><rect x="3.5" y="0.5" width="12" height="14.5" fill="#fdfdfd" stroke="#dadada"/><rect x="0.5" y="3" width="11" height="8.6" rx="1" fill="#f2f2f2" stroke="#c2c2c2"/><rect x="2" y="4.6" width="8" height="5.2" fill="url(#sc)"/></svg>
<svg style="left:83px;top:83px" width="16" height="16" viewBox="0 0 16 16"><defs><linearGradient id="fs" x1="0" y1="0" x2="0" y2="1"><stop offset="0" stop-color="#ffe9a8"/><stop offset="1" stop-color="#f7c558"/></linearGradient><radialGradient id="fsg" cx="0.4" cy="0.35" r="0.7"><stop offset="0" stop-color="#e8f6ff"/><stop offset="1" stop-color="#8cc8f4"/></radialGradient></defs><path d="M0.6 1.2H5L6.4 2.8H13.2V5H15.2L13.4 12.4H0.6Z" fill="url(#fs)" stroke="#dea043" stroke-width="1"/><path d="M0.8 12.2L2.6 5.6H15" fill="none" stroke="#e8b050" stroke-width="0.8"/><circle cx="9.6" cy="9" r="3.5" fill="url(#fsg)" stroke="#6f8fae" stroke-width="1"/><path d="M12.2 11.6L14 13.4" stroke="#8a6a3a" stroke-width="1.4"/><circle cx="14.3" cy="13.6" r="1.5" fill="#f5a623"/></svg>
<svg style="left:110.5px;top:83px" width="14" height="16" viewBox="0 0 14 16"><defs><linearGradient id="bk" x1="0" y1="0" x2="1" y2="0"><stop offset="0" stop-color="#9c9c9c"/><stop offset="0.45" stop-color="#c6c6c6"/><stop offset="1" stop-color="#a8a8a8"/></linearGradient></defs><path d="M0.4 0.6L5.6 0.2V15.6L0.4 13.2Z" fill="#a2a2a2"/><path d="M5.6 0.2H12V8.6L13.2 9.4V13H5.6Z" fill="url(#bk)"/><path d="M5.6 0.2V15.6" stroke="#8c8c8c" stroke-width="0.8"/><rect x="11" y="9.2" width="1.6" height="2.6" rx="0.8" fill="#fff"/></svg>
<svg style="left:142px;top:83px" width="16" height="15" viewBox="0 0 16 15"><path d="M0.4 1.8C1 0 2.8 -0.1 4 1.2C7.2 4.6 10.6 9 13.4 13.4L12 14.4C9 10.2 5.4 6 0.4 1.8Z" fill="#cc0e0e"/><path d="M16 0.4C11.2 3.2 6.2 8.8 3.4 14C2.6 15.4 0.2 15 0.6 13.2C3.6 7.8 9.6 2.4 15.6 -0.4Z" fill="#d41212"/><path d="M1.6 1.6C3.6 3 5.6 5 7 6.8" stroke="#ff9088" stroke-width="0.7" fill="none"/></svg>
<svg style="left:165px;top:83.5px" width="16" height="14" viewBox="0 0 16 14"><defs><linearGradient id="rn" x1="0" y1="0" x2="0" y2="1"><stop offset="0" stop-color="#c8c8c8"/><stop offset="1" stop-color="#fff"/></linearGradient></defs><rect x="0.6" y="2.8" width="14.8" height="7.6" fill="#fff" stroke="#1a78c8" stroke-width="1.2"/><rect x="0" y="9.6" width="16" height="1.4" fill="#1a78c8"/><rect x="2.4" y="5" width="4.6" height="3" fill="#2a8ad8"/><rect x="10" y="4" width="4.4" height="3.4" fill="url(#rn)"/><path d="M8.5 1V13M6.3 0.6H10.7M6.3 13.4H10.7" stroke="#3a3a3a" stroke-width="0.9"/></svg>
<svg style="left:195px;top:83px" width="12" height="16" viewBox="0 0 12 16"><defs><linearGradient id="da" x1="0" y1="0" x2="1" y2="1"><stop offset="0" stop-color="#b9d6f2"/><stop offset="1" stop-color="#e6f1fb"/></linearGradient></defs><path d="M0.5 0.5H8.4L11.5 3.6V15.1H0.5Z" fill="url(#da)" stroke="#5b8fd0"/><path d="M8.4 0.5V3.6H11.5" fill="#fff" stroke="#5b8fd0" stroke-width="0.8"/><text x="6" y="12.6" text-anchor="middle" font-family="Liberation Sans,sans-serif" font-weight="bold" font-size="7.5" fill="#d0304c">A</text></svg>
<svg style="left:221px;top:83px" width="16" height="16" viewBox="0 0 16 16"><rect x="0" y="0" width="16" height="16" fill="#8fba2c"/><path d="M4.6 6.6H11.4V11.4Q11.4 12 10.8 12H10.2V13.6Q10.2 14.3 9.5 14.3Q8.8 14.3 8.8 13.6V12H7.2V13.6Q7.2 14.3 6.5 14.3Q5.8 14.3 5.8 13.6V12H5.2Q4.6 12 4.6 11.4Z" fill="#fff"/><path d="M4.6 6.1Q4.7 3.2 8 3.2Q11.3 3.2 11.4 6.1Z" fill="#fff"/><rect x="2.7" y="6.6" width="1.4" height="4.3" rx="0.7" fill="#fff"/><rect x="11.9" y="6.6" width="1.4" height="4.3" rx="0.7" fill="#fff"/><path d="M5.6 2.2L6.4 3.6M10.4 2.2L9.6 3.6" stroke="#fff" stroke-width="0.6"/></svg>
<svg style="left:306px;top:62px" width="11" height="14" viewBox="0 0 11 14"><path d="M2.6 6.4V4.6C2.6 -0.2 8.6 -0.2 8.6 4.6V6.4" fill="none" stroke="#1e74ff" stroke-width="1.9"/><rect x="0" y="5.9" width="11" height="7.7" rx="1.4" fill="#1e74ff"/><rect x="5" y="9" width="1.1" height="2.4" fill="#cfe2ff"/><rect x="4.4" y="9" width="1.2" height="1" fill="#cfe2ff"/></svg>
<svg style="left:332px;top:61.7px" width="14" height="14" viewBox="0 0 14 14"><path d="M0.8 0H11.6L14 2.2V13.2Q14 14 13.2 14H0.8Q0 14 0 13.2V0.8Q0 0 0.8 0Z" fill="#5a5a5a"/><rect x="3.4" y="0.4" width="7.2" height="3.6" fill="#f4f4f4"/><rect x="8.4" y="0.6" width="1.6" height="2.7" fill="#222"/><rect x="2.8" y="7.8" width="8.6" height="6.2" fill="#c9c9c9"/><rect x="2.8" y="9" width="8.6" height="1.1" fill="#8d8d8d"/><rect x="2.8" y="11" width="8.6" height="1.1" fill="#8d8d8d"/><rect x="2.8" y="12.9" width="8.6" height="1.1" fill="#e8e8e8"/></svg>
<svg style="left:359px;top:60.8px" width="16" height="15.2" viewBox="0 0 16 15.2"><defs><linearGradient id="cp" x1="0" y1="0" x2="0" y2="1"><stop offset="0" stop-color="#f2f8fc"/><stop offset="0.75" stop-color="#b4d6ea"/><stop offset="0.8" stop-color="#e6f2fa"/><stop offset="1" stop-color="#eef6fb"/></linearGradient></defs><path d="M0.75 0.75H6.4L9.25 3.6V11.6H0.75Z" fill="url(#cp)" stroke="#1c6fb4" stroke-width="1.5"/><path d="M6 0.8V4H9.2" fill="#fff" stroke="#1c6fb4" stroke-width="1"/><path d="M6.75 3.75H12.4L15.25 6.6V14.4H6.75Z" fill="url(#cp)" stroke="#1c6fb4" stroke-width="1.5"/><path d="M12 3.8V7H15.2" fill="#fff" stroke="#1c6fb4" stroke-width="1"/></svg>
<svg style="left:382.6px;top:61px" width="15" height="16" viewBox="0 0 15 16"><path d="M2.4 0.4L9 10.6M12.4 0.4L5.8 10.6" stroke="#6e6e6e" stroke-width="1.1" fill="none"/><ellipse cx="3.4" cy="13" rx="1.7" ry="2.7" transform="rotate(32 3.4 13)" fill="none" stroke="#2f8fbf" stroke-width="1.2"/><ellipse cx="11.4" cy="13" rx="1.7" ry="2.7" transform="rotate(-32 11.4 13)" fill="none" stroke="#2f8fbf" stroke-width="1.2"/><circle cx="7.4" cy="8.2" r="0.7" fill="#444"/></svg>
<svg style="left:404.6px;top:60.8px" width="15" height="16" viewBox="0 0 15 16"><defs><linearGradient id="ps" x1="0" y1="0" x2="1" y2="0"><stop offset="0" stop-color="#c98a2c"/><stop offset="0.5" stop-color="#ecc77a"/><stop offset="1" stop-color="#c98a2c"/></linearGradient></defs><rect x="0.5" y="1.5" width="9.4" height="11.4" rx="0.8" fill="url(#ps)" stroke="#ad6a18"/><rect x="3" y="0" width="4.4" height="2.6" rx="0.8" fill="#8c8c8c"/><rect x="3.8" y="0.6" width="2.8" height="0.9" fill="#e0e0e0"/><path d="M5.9 4.4H11.4L14.4 7.4V15.2H5.9Z" fill="#fff" stroke="#9a9a9a" stroke-width="0.9"/><path d="M11.4 4.4V7.4H14.4" fill="#f2f2f2" stroke="#9a9a9a" stroke-width="0.7"/><path d="M7.4 9.5H12.8M7.4 11.5H12.8M7.4 13.4H12.8" stroke="#7fa6d6" stroke-width="0.9"/></svg>
<svg style="left:432.8px;top:63.7px" width="16.2" height="11.6" viewBox="0 0 16.2 11.6"><defs><linearGradient id="ud" x1="0" y1="0" x2="0" y2="1"><stop offset="0" stop-color="#a4a4a4"/><stop offset="1" stop-color="#747474"/></linearGradient></defs><path d="M0.5 3.4L0.9 11.5L8 9.2L5.6 7.6C6.8 5.2 10.6 5 11.3 11.4L16 11.4C15.8 0.2 5.2 -2 2.8 4.8Z" fill="url(#ud)"/></svg>
<svg style="left:455.8px;top:63.7px" width="16.2" height="11.6" viewBox="0 0 16.2 11.6"><defs><linearGradient id="ud" x1="0" y1="0" x2="0" y2="1"><stop offset="0" stop-color="#a4a4a4"/><stop offset="1" stop-color="#747474"/></linearGradient></defs><g transform="translate(16.2 0) scale(-1 1)"><path d="M0.5 3.4L0.9 11.5L8 9.2L5.6 7.6C6.8 5.2 10.6 5 11.3 11.4L16 11.4C15.8 0.2 5.2 -2 2.8 4.8Z" fill="url(#ud)"/></g></svg>
<svg style="left:483.8px;top:61.8px" width="16.3" height="14" viewBox="0 0 16.3 14"><defs><linearGradient id="al" x1="0" y1="0" x2="0" y2="1"><stop offset="0" stop-color="#7cc0f8"/><stop offset="0.5" stop-color="#2f80e0"/><stop offset="1" stop-color="#1a58b8"/></linearGradient></defs><path d="M0.3 6.9L7.2 0.3V3.6H16V10.4H7.2V13.6Z" fill="url(#al)" stroke="#2a62b8" stroke-width="0.6"/></svg>
<svg style="left:506.8px;top:61.8px" width="16.3" height="14" viewBox="0 0 16.3 14"><defs><linearGradient id="ar" x1="0" y1="0" x2="0" y2="1"><stop offset="0" stop-color="#c4c4c4"/><stop offset="0.5" stop-color="#909090"/><stop offset="1" stop-color="#6c6c6c"/></linearGradient></defs><path d="M16 6.9L9.1 0.3V3.6H0.3V10.4H9.1V13.6Z" fill="url(#ar)" stroke="#6a6a6a" stroke-width="0.6"/></svg>
<svg style="left:534.8px;top:60.6px" width="16.5" height="15.5" viewBox="0 0 16.5 15.5"><path d="M0 1.6H12.6M0 5.6H8M0 9.6H12.6M0 13.6H8" stroke="#48607f" stroke-width="1.3"/><path d="M9.6 4.6L12 6.4C14.6 5.4 15.8 3.2 15.6 0.6" fill="none" stroke="#2f8ee6" stroke-width="1.6"/><path d="M9 3.4L12.4 7.2L9 6.8Z" fill="#2f8ee6"/><path d="M9.6 12.6L12 14.4C14.6 13.4 15.8 11.2 15.6 8.6" fill="none" stroke="#2f8ee6" stroke-width="1.6"/><path d="M9 11.4L12.4 15.2L9 14.8Z" fill="#2f8ee6"/></svg>
<svg style="left:563.5px;top:61px" width="15" height="15.6" viewBox="0 0 15 15.6"><rect x="0.3" y="0.3" width="14.4" height="15" fill="#fbfbfb" stroke="#d0d0d0" stroke-width="0.6"/><path d="M8.8 0.8C6.2 2.8 9.6 4.2 7.4 6.8" fill="none" stroke="#e02020" stroke-width="0.9"/><path d="M6.8 2.6C5.2 4.2 7.4 5 6.2 7" fill="none" stroke="#ee7070" stroke-width="0.7"/><path d="M3.6 8.2H10.4C10.4 11.8 3.6 11.8 3.6 8.2Z" fill="#fff" stroke="#2a3ab8" stroke-width="0.8"/><path d="M10.4 8.6C13 8 12.8 10.4 10 10.6" fill="none" stroke="#2a3ab8" stroke-width="0.8"/><path d="M5 9.6H9" stroke="#5a68c8" stroke-width="0.7"/><path d="M2.2 12.8C4.6 14.2 10.4 14.2 12.8 12.8" fill="none" stroke="#2a3ab8" stroke-width="0.9"/></svg>
<svg style="left:589px;top:63px" width="11" height="11.3" viewBox="0 0 11 11.3"><rect x="0" y="0" width="11" height="1" fill="#9db4d9"/><rect x="0" y="2.2" width="11" height="1" fill="#9db4d9"/><rect x="0" y="4.3" width="8" height="1" fill="#9db4d9"/><rect x="0" y="6.3" width="11" height="1" fill="#9db4d9"/><rect x="0" y="8.3" width="11" height="1" fill="#9db4d9"/><rect x="0" y="10.3" width="8" height="1" fill="#9db4d9"/></svg>
<svg style="left:612px;top:61.8px" width="10.2" height="15.4" viewBox="0 0 10.2 15.4"><path d="M0 0.7H5.6V5" fill="none" stroke="#3a6ea8" stroke-width="1.1"/><path d="M2.8 3.4L5.6 6.6L8.4 3.4" fill="none" stroke="#3c4654" stroke-width="1.1"/><circle cx="5.5" cy="10.6" r="4.6" fill="#2e8a2e"/><circle cx="5.5" cy="10.6" r="4.6" fill="none" stroke="#1f6f1f" stroke-width="0.5"/><path d="M7.8 9.2A2.6 2.6 0 1 0 7.8 12" fill="none" stroke="#fff" stroke-width="1.4"/></svg>
<svg style="left:307.5px;top:84.8px" width="11.5" height="14.2" viewBox="0 0 11.5 14.2"><path d="M0.6 0.6H7.6L10.8 3.8V13.6H0.6Z" fill="#fdfaf0" stroke="#a07828" stroke-width="1.1"/><path d="M7.6 0.6V3.8H10.8" fill="#f3e6c0" stroke="#a07828" stroke-width="0.8"/><text x="4.9" y="12.3" text-anchor="middle" font-family="Liberation Sans,sans-serif" font-weight="bold" font-size="11.5" fill="#1f4f9a">J</text></svg>
<svg style="left:540.8px;top:84px" width="12.8" height="12.8" viewBox="0 0 12.8 12.8"><circle cx="6.4" cy="6.4" r="6.3" fill="#2f8f2f"/><circle cx="6.4" cy="6.4" r="5.9" fill="none" stroke="#1f6f1f" stroke-width="0.7"/><path d="M9.4 4.4A3.6 3.6 0 1 0 9.4 8.4" fill="none" stroke="#fff" stroke-width="1.9"/></svg>
</body></html>
